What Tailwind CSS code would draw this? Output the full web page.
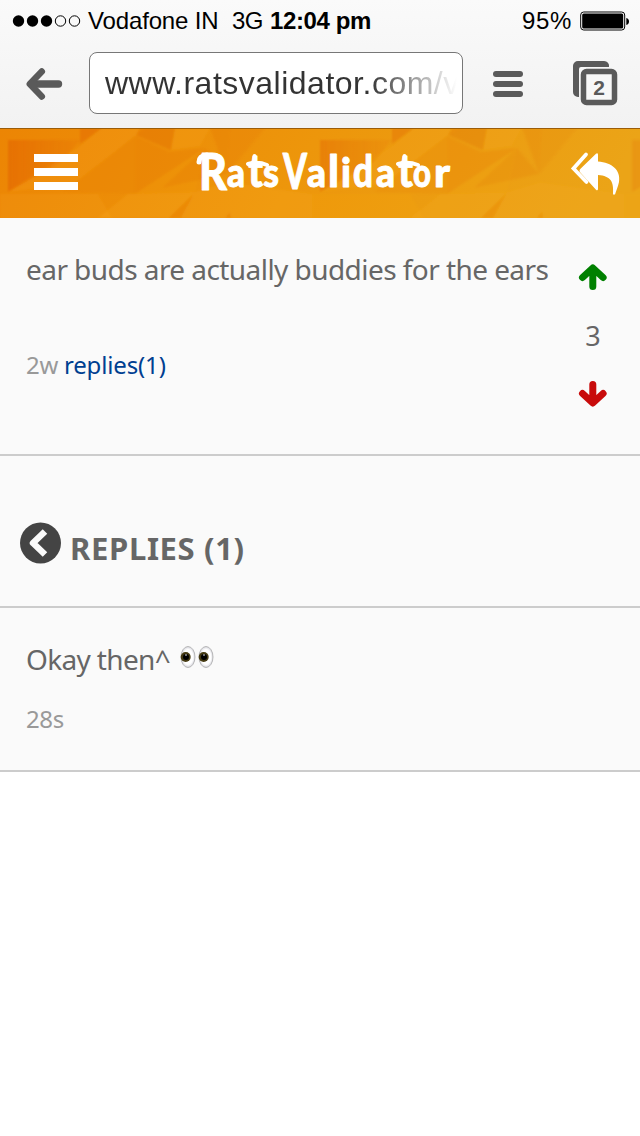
<!DOCTYPE html>
<html lang="en">
<head>
<meta charset="utf-8">
<title>RatsValidator</title>
<script src="https://cdn.jsdelivr.net/npm/@tailwindcss/browser@4"></script>
</head>
<body class="w-[640px] h-[1136px] bg-white overflow-hidden font-['Noto_Sans',sans-serif] text-[#666]">
<div class="h-32 bg-gradient-to-b from-[#fafafa] to-[#f2f2f2] font-['Liberation_Sans',sans-serif]">
  <div class="h-[42px] flex items-center text-black text-2xl leading-none whitespace-pre">
    <svg class="ml-3 shrink-0" width="70" height="14" viewBox="0 0 70 14"><g><circle cx="6.5" cy="7" r="5.7"/><circle cx="20.5" cy="7" r="5.7"/><circle cx="34.5" cy="7" r="5.7"/></g><g fill="none" stroke="#000"><circle cx="48.5" cy="7" r="5.2"/><circle cx="62.5" cy="7" r="5.2"/></g></svg>
    <span class="ml-1.5 w-[144px] tracking-[-0.15px]">Vodafone IN</span>
    <span class="w-[38px] tracking-[-0.5px]">3G</span>
    <span class="font-bold tracking-[-0.4px] w-[252px]">12:04 pm</span>
    <span class="w-[58px] tracking-[0.6px]">95%</span>
    <svg class="shrink-0" width="50" height="20" viewBox="0 0 50 20"><rect x=".7" y="1" width="44" height="18" rx="3" fill="#fff" stroke="#000"/><rect x="2.2" y="2.500" width="41" height="15" rx="1.500"/><path d="M46.3 7c3.6.5 3.6 6.500 0 7z"/></svg>
  </div>
  <div class="h-[86px] flex items-start">
    <svg class="ml-6 mt-[25px]" width="40" height="34" viewBox="0 0 40 34" fill="none" stroke="#5a5a5a" stroke-linecap="round" stroke-linejoin="round"><path stroke-width="7.400" d="M34.500 17H8"/><path stroke-width="6.500" d="M17.800 4.500 5.800 17l12 12.500"/><path d="M8 13v8l4-4z" fill="#5a5a5a"/></svg>
    <div class="ml-[25px] mt-[10px] w-[374px] h-[62px] rounded-lg border border-[#777] bg-white pl-[15px] flex items-center overflow-hidden">
      <span class="w-[352px] overflow-hidden whitespace-nowrap text-[32px] leading-[60px] tracking-[0.5px] bg-gradient-to-r from-[#333] from-75% to-transparent bg-clip-text text-transparent">www.ratsvalidator.com/v</span>
    </div>
    <svg class="ml-[30px] mt-[28px]" width="30" height="28" fill="#5a5a5a"><rect y="1" width="30" height="6" rx="3"/><rect y="11" width="30" height="6" rx="3"/><rect y="21" width="30" height="6" rx="3"/></svg>
    <svg class="ml-[49px] mt-[18px]" width="46" height="46" viewBox="0 0 46 46"><path d="M6 37a5 5 0 0 1-5-5V6a5 5 0 0 1 5-5h26a5 5 0 0 1 5 6H9a2 2 0 0 0-2 2v28z" fill="#5a5a5a"/><rect x="11.500" y="11.500" width="31" height="31" rx="3" fill="#f7f7f7" stroke="#5a5a5a" stroke-width="5.500"/><text x="27" y="35" text-anchor="middle" font-family="Liberation Sans" font-weight="bold" font-size="21" fill="#5a5a5a">2</text></svg>
  </div>
</div>
<header class="h-[90px]">
  <svg class="block" width="640" height="90" viewBox="0 0 640 90">
    <defs>
      <linearGradient id="base" x2="1" y2=".08"><stop stop-color="#ec8504"/><stop offset=".5" stop-color="#ed960b"/><stop offset="1" stop-color="#eba417"/></linearGradient>
      <linearGradient id="dark"><stop stop-color="#e05800" stop-opacity=".45"/><stop offset="1" stop-color="#e05800" stop-opacity=".12"/></linearGradient>
      <filter id="soft" x="0" y="0" width="1" height="1"><feGaussianBlur stdDeviation="1"/></filter>
      <g id="facets">
        <path d="M8 12H80L62 34 8 64z" fill="url(#dark)"/>
        <path d="M80 0h22L80 16z" fill="#e25e00" opacity=".4"/>
        <path d="M102 0h45l-12 8-60 48-67 8 72-46z" fill="#ffae25" opacity=".15"/>
        <path d="M135 8 62 64l73 2z" fill="#e77700" opacity=".2"/>
        <path d="M135 8v58l70-46-36 4z" fill="#e77700" opacity=".28"/>
        <path d="M140 0h35l-4 22-35-15z" fill="#df6500" opacity=".33"/>
        <path d="m171 22 4-22h35l-10 18z" fill="#ffb52b" opacity=".14"/>
        <path d="M210 0h20l-3 46zM205 20l22 26-65 14z" fill="#df6800" opacity=".2"/>
        <path d="m227 46 3-46h35z" fill="#df6800" opacity=".15"/>
        <path d="m194 66-25 24h12z" fill="#df6500" opacity=".35"/>
        <path d="M225 90l5-6 1 6z" fill="#df6500" opacity=".35"/>
        <path d="M0 66h68L32 90H0zM68 66h30l14 24H32z" fill="#ffb52d" opacity=".12"/>
        <path d="M128 66 98 90h71l26-26z" fill="#ffb82e" opacity=".16"/>
        <path d="m205 20-70 46 60-2z" fill="#ffb82e" opacity=".06"/>
        <path d="m195 64 33-10 84 12v24H170z" fill="#ffb82e" opacity=".14"/>
      </g>
    </defs>
    <rect width="640" height="90" fill="url(#base)"/>
    <g filter="url(#soft)"><use href="#facets"/><use href="#facets" x="312" opacity=".75"/><use href="#facets" x="624" opacity=".4"/></g>
    <path d="M0 .5h640" stroke="#9b5c08"/>
    <path d="M34 26h44v8H34zm0 14h44v8H34zm0 14h44v8H34z" fill="#fff"/>
    <g fill="#fff" stroke="#fff" stroke-width=".9" stroke-linejoin="round" font-family="Lato" font-weight="900" font-size="39">
      <text x="199" y="62" font-size="51" textLength="28" lengthAdjust="spacingAndGlyphs">R</text>
      <text x="227" y="59" textLength="18" lengthAdjust="spacingAndGlyphs">a</text>
      <text x="248" y="59" font-size="45" textLength="15" lengthAdjust="spacingAndGlyphs">t</text>
      <text x="263" y="59" textLength="16" lengthAdjust="spacingAndGlyphs">s</text>
      <text x="283" y="61" font-size="49" textLength="24" lengthAdjust="spacingAndGlyphs">V</text>
      <text x="307" y="59" textLength="19" lengthAdjust="spacingAndGlyphs">a</text>
      <text x="328" y="59" font-size="44" textLength="11" lengthAdjust="spacingAndGlyphs">l</text>
      <text x="341" y="59" textLength="10" lengthAdjust="spacingAndGlyphs">i</text>
      <text x="353" y="59" font-size="43" textLength="20" lengthAdjust="spacingAndGlyphs">d</text>
      <text x="376" y="59" textLength="19" lengthAdjust="spacingAndGlyphs">a</text>
      <text x="398" y="59" font-size="45" textLength="15" lengthAdjust="spacingAndGlyphs">t</text>
      <text x="413" y="59" textLength="18" lengthAdjust="spacingAndGlyphs">o</text>
      <text x="434" y="59" textLength="16" lengthAdjust="spacingAndGlyphs">r</text>
    </g>
    <g fill="none" stroke="#fff" stroke-width="4" stroke-linecap="round"><path d="M248 36q10-3 19 1M398 36q10-3 20 1M254.500 28v10M404.500 28v10"/><path d="M199 34q0-6 8-7" stroke-width="5"/></g>
    <path d="M586 26.500 573.500 40.500 586.500 54" fill="none" stroke="#fff" stroke-width="3.800" stroke-linecap="round"/>
    <path d="M596 25c1-1 2-.500 2 1V33c14 1 23 9 21 21-1 5-3 9-4 13h-2c1-13-2-19-15-20v14c0 1.500-1 2-2 1L580.500 44.500q-2-2 0-4z" fill="#fff" transform="translate(0 1.500) scale(1 .97)"/>
  </svg>
</header>
<main>
  <section class="h-[238px] bg-[#fafafa] border-b-2 border-[#ccc] flex">
    <div class="w-[552px] pl-[26px] pt-[31px]">
      <p class="h-10 leading-10 text-[28px] tracking-[-0.56px] whitespace-nowrap">ear buds are actually buddies for the ears</p>
      <p class="mt-[57px] leading-[38px] text-2xl text-[#999] tracking-[-0.3px]">2w <a class="text-[#003f91] tracking-[-0.15px]">replies(1)</a></p>
    </div>
    <div class="w-[82px] flex flex-col items-center">
      <svg class="mt-[45px]" width="30" height="28" viewBox="0 0 30 28" fill="none" stroke="#008000" stroke-width="7" stroke-linecap="round"><path d="M4.500 14.500 14.800 5 25.100 14.500M14.800 6v17.500" stroke-linejoin="round"/></svg>
      <span class="mt-[25px] leading-10 text-[27px]">3</span>
      <svg class="mt-[24px]" width="30" height="28" viewBox="0 0 30 28" fill="none" stroke="#c80b0b" stroke-width="7" stroke-linecap="round"><path d="M4.500 13.500 14.800 23 25.100 13.500M14.800 22V4.500" stroke-linejoin="round"/></svg>
    </div>
  </section>
  <section class="h-[152px] bg-[#fafafa] border-b-2 border-[#ccc] flex items-start pl-5">
    <svg class="mt-[66px]" width="41" height="42" viewBox="0 0 41 42"><circle cx="20.500" cy="21" r="20.500" fill="#444"/><path d="M25 9.500 13 21l12 11.500" fill="none" stroke="#fafafa" stroke-width="6.500" stroke-linejoin="round"/></svg>
    <h2 class="ml-[9px] mt-[72px] leading-10 text-[31px] font-bold tracking-[0.65px]">REPLIES (1)</h2>
  </section>
  <section class="h-[164px] bg-[#fafafa] border-b-2 border-[#ccc] pl-[26px] pt-[31px]">
    <p class="flex items-start h-10 leading-10 text-[28px] tracking-[-0.65px]"><span class="w-[154px] whitespace-nowrap">Okay then^</span>
      <svg role="img" aria-label="👀" class="mt-[6px]" width="34" height="24" viewBox="0 0 34 24"><defs><radialGradient id="eye"><stop offset=".7" stop-color="#fff"/><stop offset="1" stop-color="#d5d5dc"/></radialGradient></defs><g fill="url(#eye)" stroke="#aaa" stroke-width=".8"><ellipse cx="8" cy="12" rx="7" ry="10.500"/><ellipse cx="26" cy="12" rx="7" ry="10.500"/></g><g fill="#453a12"><circle cx="5.700" cy="12" r="5"/><circle cx="23.700" cy="12" r="5"/></g><g><circle cx="6" cy="12" r="3"/><circle cx="24" cy="12" r="3"/></g><g fill="#fff"><circle cx="6" cy="10" r=".8"/><circle cx="24" cy="10" r=".8"/></g></svg>
    </p>
    <p class="mt-[21px] leading-[38px] text-2xl text-[#999] tracking-[-0.4px]">28s</p>
  </section>
</main>
</body>
</html>
